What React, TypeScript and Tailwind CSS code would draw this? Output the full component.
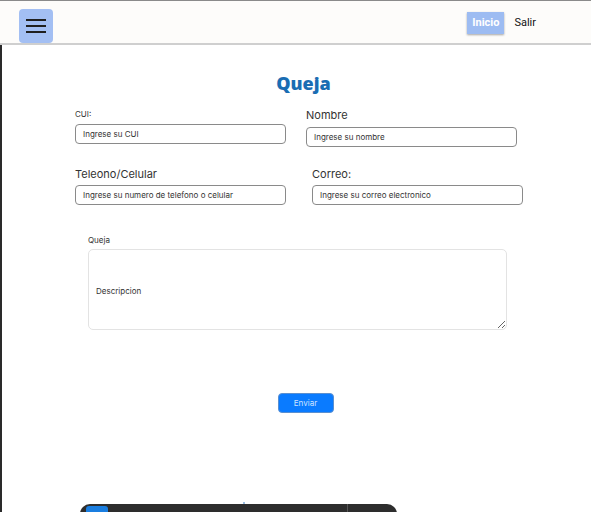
import React from "react";

const font = { fontFamily: "Inter, 'Liberation Sans', sans-serif" };

const Field = ({
  label,
  placeholder,
  labelClass,
  className,
}: {
  label: string;
  placeholder: string;
  labelClass: string;
  className: string;
}): React.JSX.Element => (
  <div className={`flex flex-col ${className}`}>
    <label className={`text-[#333] ${labelClass}`}>{label}</label>
    <input
      className="h-[20px] w-[211px] rounded-[4px] border border-[#8a8a8a] bg-white px-[7px] text-[8px] text-[#333] outline-none placeholder:text-[#333]"
      placeholder={placeholder}
    />
  </div>
);

const App = (): React.JSX.Element => {
  return (
    <div className="relative h-[512px] w-[591px] overflow-hidden bg-white" style={font}>
      {/* Header */}
      <header className="flex h-[45px] items-start justify-between border-t border-b-2 border-t-[#8a8a8a] border-b-[#cfcfcf] bg-[#fdfcfa] pl-[19px] pr-[55px]">
        <button className="mt-[8px] flex h-[34px] w-[34px] flex-col items-center justify-center gap-[4px] rounded-[4px] bg-[#a3bff3]">
          <span className="h-[2px] w-[20px] bg-[#1f1f1f]" />
          <span className="h-[2px] w-[20px] bg-[#1f1f1f]" />
          <span className="h-[2px] w-[20px] bg-[#1f1f1f]" />
        </button>
        <nav className="mt-[11px] flex items-center gap-[10px]">
          <button
            className="flex h-[22px] items-center bg-[#9dbcf2] px-[5px] text-[11px] font-bold text-white shadow-[0_1px_2px_rgba(0,0,0,0.35)]"
            style={{ fontFamily: "Roboto, 'Liberation Sans', sans-serif" }}
          >
            Inicio
          </button>
          <span
            className="text-[11px] text-[#111]"
            style={{ fontFamily: "Roboto, 'Liberation Sans', sans-serif" }}
          >
            Salir
          </span>
        </nav>
      </header>

      {/* Left edge */}
      <div className="absolute bottom-0 left-0 top-[45px] w-[2px] bg-[#2a2a2a]" />

      <main className="flex flex-col">
        <h1
          className="mt-[26px] pl-[16px] text-center text-[18px] font-extrabold leading-[24px] text-[#1a6db3]"
          style={{ fontFamily: "'Open Sans', sans-serif" }}
        >
          Queja
        </h1>

        <div className="mt-[13px] flex pl-[75px]">
          <Field
            label="CUI:"
            placeholder="Ingrese su CUI"
            labelClass="text-[8px] leading-[10px] mb-[5px]"
            className="pt-[1px]"
          />
          <Field
            label="Nombre"
            placeholder="Ingrese su nombre"
            labelClass="text-[11px] leading-[14px] mb-[5px]"
            className="ml-[20px]"
          />
        </div>

        <div className="mt-[20px] flex pl-[75px]">
          <Field
            label="Teleono/Celular"
            placeholder="Ingrese su numero de telefono o celular"
            labelClass="text-[11px] leading-[14px] mb-[4px]"
            className=""
          />
          <Field
            label="Correo:"
            placeholder="Ingrese su correo electronico"
            labelClass="text-[11px] leading-[14px] mb-[4px]"
            className="ml-[26px]"
          />
        </div>

        <div className="mt-[30px] flex flex-col pl-[88px]">
          <label className="mb-[4px] text-[8px] leading-[10px] text-[#333]">Queja</label>
          <textarea
            className="h-[81px] w-[419px] resize rounded-[5px] border border-[#e3e3e3] px-[7px] pt-[35px] text-[8px] text-[#333] outline-none placeholder:text-[#333]"
            placeholder="Descripcion"
          />
        </div>

        <div className="mt-[63px] flex justify-center pl-[20px]">
          <button className="h-[20px] w-[56px] rounded-[4px] border border-[#5a8fd0] bg-[#0a7bff] text-[8px] text-[#cfe3ff]">
            Enviar
          </button>
        </div>
      </main>

      {/* Bottom floating bar */}
      <div className="absolute left-[80px] top-[504px] flex h-[20px] w-[317px] items-start rounded-t-[10px] bg-[#2d2d2d]">
        <span className="ml-[6px] mt-[2px] h-[10px] w-[22px] rounded-[3px] bg-[#1a7ee0]" />
        <span className="ml-auto mr-[49px] h-full w-[1px] bg-[#555]" />
      </div>
      <span className="absolute left-[243px] top-[502px] h-[2px] w-[2px] rounded-full bg-[#7aa8d8]" />
    </div>
  );
};

export default App;
